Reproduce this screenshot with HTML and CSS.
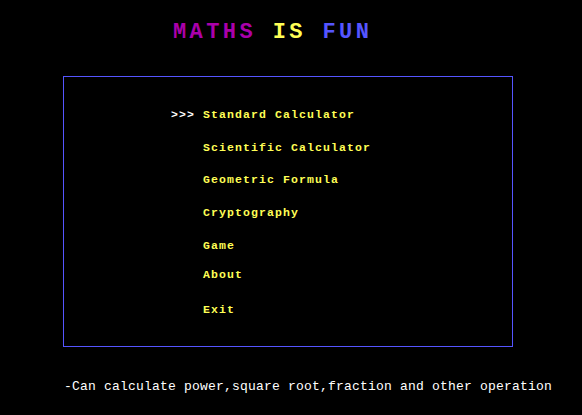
FILE: index.html
```html
<!DOCTYPE html>
<html>
<head>
<meta charset="utf-8">
<link rel="stylesheet" href="styles.css">
</head>
<body>
<div class="screen">
  <h1 class="title"><span class="t-maths">MATHS</span> <span class="t-is">IS</span> <span class="t-fun">FUN</span></h1>
  <div class="menu-box">
    <ul class="menu">
      <li class="item selected"><span class="cursor">&gt;&gt;&gt; </span>Standard Calculator</li>
      <li class="item">Scientific Calculator</li>
      <li class="item">Geometric Formula</li>
      <li class="item">Cryptography</li>
      <li class="item">Game</li>
      <li class="item">About</li>
      <li class="item">Exit</li>
    </ul>
  </div>
  <p class="desc">-Can calculate power,square root,fraction and other operation</p>
</div>
</body>
</html>
```
FILE: styles.css
```css
html, body {
  margin: 0;
  padding: 0;
  background: #000;
}
.screen {
  width: 582px;
  height: 415px;
  background: #000;
  overflow: hidden;
}
.title {
  margin: 0;
  padding: 24px 0 0 173px;
  height: 52px;
  box-sizing: border-box;
  font-family: "Liberation Mono", "DejaVu Sans Mono", monospace;
  font-weight: bold;
  font-size: 22px;
  letter-spacing: 3.4px;
  line-height: 18px;
  white-space: pre;
}
.t-maths { color: #aa00aa; }
.t-is { color: #ffff55; }
.t-fun { color: #5555ff; }
.menu-box {
  margin: 24px 0 0 63px;
  width: 450px;
  height: 271px;
  box-sizing: border-box;
  border: 1px solid #5555ff;
  padding-top: 30px;
}
.menu {
  list-style: none;
  margin: 0;
  padding: 0 0 0 107px;
  display: flex;
  flex-direction: column;
}
.item {
  font-family: "Liberation Mono", "DejaVu Sans Mono", monospace;
  font-weight: bold;
  font-size: 11.5px;
  letter-spacing: 1.1px;
  line-height: 16px;
  height: 16px;
  color: #ffff55;
  white-space: pre;
  padding-left: 32px;
}
.item.selected { padding-left: 0; }
.cursor { color: #ffffff; }
.item:nth-child(2) { margin-top: 17px; }
.item:nth-child(3) { margin-top: 16px; }
.item:nth-child(4) { margin-top: 17px; }
.item:nth-child(5) { margin-top: 17px; }
.item:nth-child(6) { margin-top: 13px; }
.item:nth-child(7) { margin-top: 19px; }
.desc {
  margin: 32px 0 0 64px;
  font-family: "Liberation Mono", "DejaVu Sans Mono", monospace;
  font-size: 13px;
  letter-spacing: 0.2px;
  line-height: 16px;
  color: #ffffff;
  white-space: pre;
}
```
